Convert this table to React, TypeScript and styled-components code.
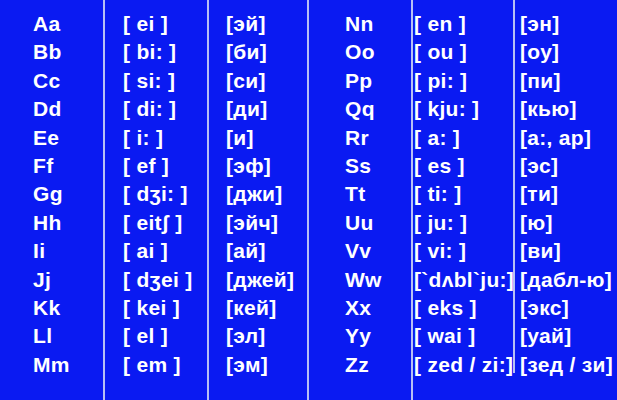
import { createGlobalStyle } from 'styled-components'
import styled from 'styled-components'

const GlobalStyle = createGlobalStyle`
  html, body {
    margin: 0;
    padding: 0;
    background: #0a1af2;
  }
`

interface ColumnProps {
  $width: number
  $inset: number
  $line?: number
}

const Board = styled.main`
  display: flex;
  width: 617px;
  height: 400px;
  background: #0a1af2;
  overflow: hidden;
`

const Column = styled.section<ColumnProps>`
  box-sizing: border-box;
  display: flex;
  flex-direction: column;
  width: ${(p) => p.$width}px;
  flex: none;
  padding-top: 10px;
  padding-left: ${(p) => p.$inset}px;
  background: ${(p) =>
    p.$line ? `linear-gradient(#b7c0f4, #b7c0f4) left top / 2px ${p.$line}px no-repeat` : 'none'};
`

const Cell = styled.div`
  height: 28.4px;
  line-height: 28.4px;
  color: #ffffff;
  font-family: 'Liberation Sans', Arial, 'DejaVu Sans', sans-serif;
  font-weight: bold;
  font-size: 21px;
  letter-spacing: 0.3px;
  white-space: nowrap;
`

const left = [
  ['Aa', '[ ei ]', '[эй]'],
  ['Bb', '[ bi: ]', '[би]'],
  ['Cc', '[ si: ]', '[си]'],
  ['Dd', '[ di: ]', '[ди]'],
  ['Ee', '[ i: ]', '[и]'],
  ['Ff', '[ ef ]', '[эф]'],
  ['Gg', '[ dʒi: ]', '[джи]'],
  ['Hh', '[ eitʃ ]', '[эйч]'],
  ['Ii', '[ ai ]', '[ай]'],
  ['Jj', '[ dʒei ]', '[джей]'],
  ['Kk', '[ kei ]', '[кей]'],
  ['Ll', '[ el ]', '[эл]'],
  ['Mm', '[ em ]', '[эм]'],
]

const right = [
  ['Nn', '[ en ]', '[эн]'],
  ['Oo', '[ ou ]', '[оу]'],
  ['Pp', '[ pi: ]', '[пи]'],
  ['Qq', '[ kju: ]', '[кью]'],
  ['Rr', '[ a: ]', '[a:, ар]'],
  ['Ss', '[ es ]', '[эс]'],
  ['Tt', '[ ti: ]', '[ти]'],
  ['Uu', '[ ju: ]', '[ю]'],
  ['Vv', '[ vi: ]', '[ви]'],
  ['Ww', '[`dʌbl`ju:]', '[дабл-ю]'],
  ['Xx', '[ eks ]', '[экс]'],
  ['Yy', '[ wai ]', '[уай]'],
  ['Zz', '[ zed / zi:]', '[зед / зи]'],
]

// width, text inset from the column's left edge, divider length
const layout: [number, number, number | undefined][] = [
  [103, 33, undefined],
  [104, 20, 400],
  [100, 19, 400],
  [104, 38, 400],
  [102, 3, 400],
  [104, 7, 373],
]

const App = () => {
  const columns = [0, 1, 2].map((i) => left.map((r) => r[i])).concat([0, 1, 2].map((i) => right.map((r) => r[i])))

  return (
    <>
      <GlobalStyle />
      <Board>
        {columns.map((items, c) => (
          <Column key={c} $width={layout[c][0]} $inset={layout[c][1]} $line={layout[c][2]}>
            {items.map((text) => (
              <Cell key={text}>{text}</Cell>
            ))}
          </Column>
        ))}
      </Board>
    </>
  )
}

export default App
